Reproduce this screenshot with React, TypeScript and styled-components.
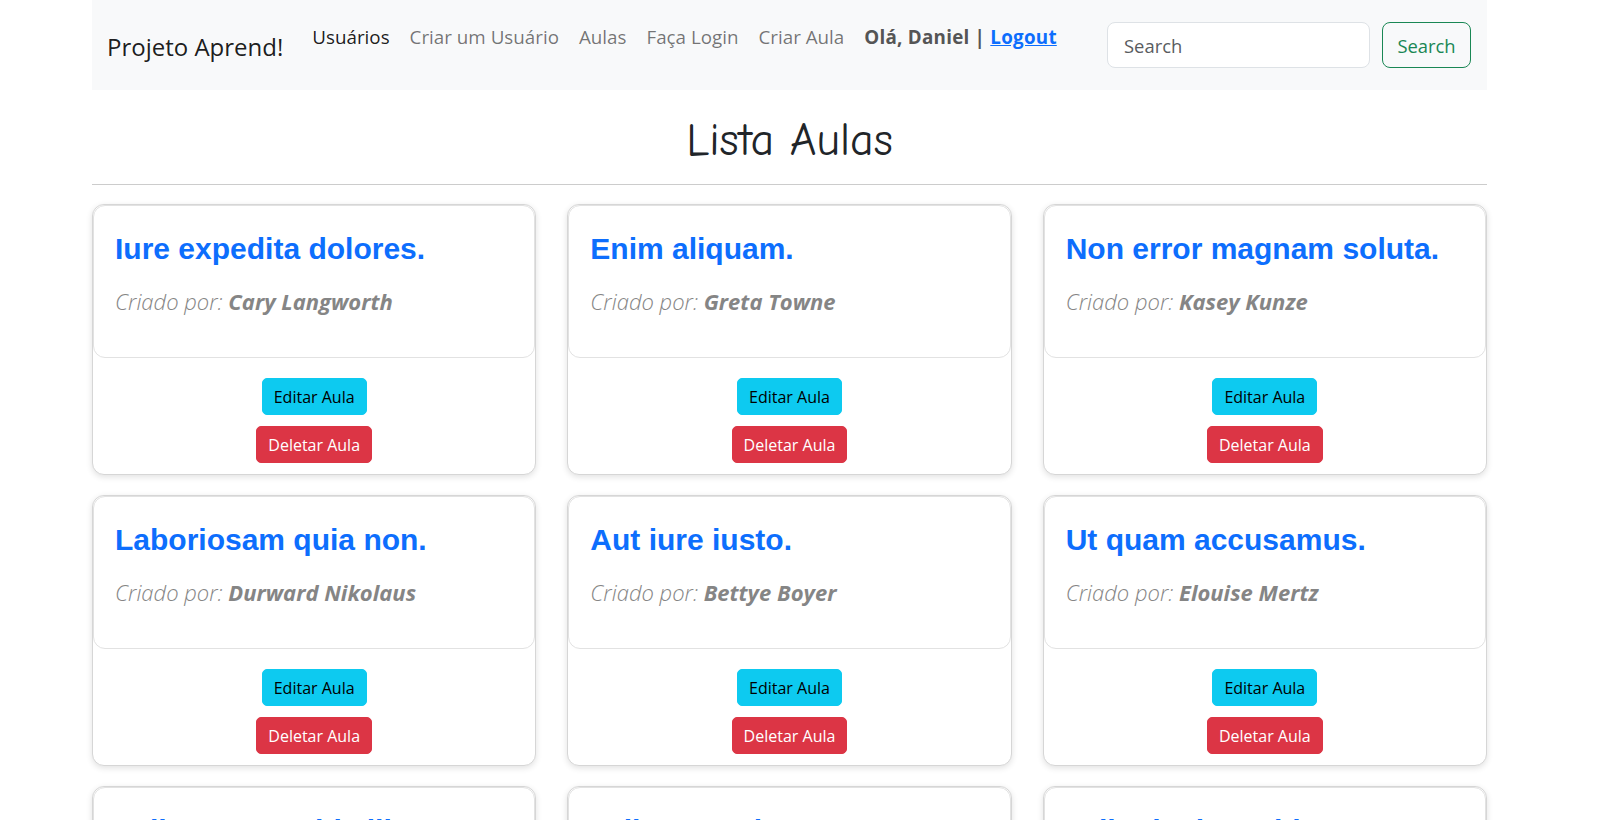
import React from "react";
import styled, { createGlobalStyle } from "styled-components";

const GlobalStyle = createGlobalStyle`
  html, body { margin: 0; padding: 0; background: #ffffff; }
  body {
    font-family: "Open Sans", "Noto Sans", Arial, sans-serif;
    color: #212529;
    overflow: hidden;
  }
  * { box-sizing: border-box; }
`;

const Page = styled.div`
  width: 1395px;
  margin-left: 92px;
`;

const NavBar = styled.nav`
  height: 90px;
  background: #f8f9fa;
  display: flex;
  align-items: flex-start;
  padding: 22px 16px 0 15px;
`;

const Brand = styled.a`
  font-size: 24px;
  line-height: 46px;
  padding-top: 2px;
  color: rgba(0, 0, 0, 0.9);
  text-decoration: none;
  white-space: nowrap;
`;

const NavList = styled.ul`
  list-style: none;
  margin: 0 0 0 29px;
  padding: 0;
  display: flex;
  gap: 20px;
  font-size: 18.8px;
  line-height: 30px;
`;

const NavLink = styled.a<{ $active?: boolean }>`
  color: ${(p) => (p.$active ? "rgba(0,0,0,0.9)" : "rgba(0,0,0,0.55)")};
  text-decoration: none;
  white-space: nowrap;
`;

const Greeting = styled.li`
  font-weight: 700;
  font-size: 18.8px;
  letter-spacing: 0.25px;
  color: #555555;
  white-space: nowrap;
`;

const LogoutLink = styled.a`
  color: #0d6efd;
  text-decoration: underline;
`;

const SearchForm = styled.form`
  margin-left: auto;
  display: flex;
  gap: 12px;
`;

const SearchInput = styled.input`
  width: 263px;
  height: 46px;
  padding: 0 16px;
  font-family: inherit;
  font-size: 18.4px;
  color: #212529;
  background: #ffffff;
  border: 1px solid #dee2e6;
  border-radius: 8px;
  outline: none;
  &::placeholder { color: #595c5f; }
`;

const SearchButton = styled.button`
  width: 89px;
  height: 46px;
  font-family: inherit;
  font-size: 18.4px;
  color: #198754;
  background: transparent;
  border: 1px solid #198754;
  border-radius: 8px;
  padding: 0;
`;

const PageTitle = styled.h1`
  margin: 28px 0 20px;
  text-align: center;
  font-family: "Comic Sans MS", "Comic Neue", "DejaVu Sans", sans-serif;
  font-weight: 400;
  font-size: 46px;
  line-height: 46px;
  color: #212529;
`;

const Divider = styled.hr`
  margin: 0 0 19px;
  border: 0;
  border-top: 1px solid #cccccc;
`;

const Grid = styled.div`
  display: grid;
  grid-template-columns: repeat(3, 1fr);
  column-gap: 31px;
  row-gap: 20px;
`;

const Card = styled.div`
  background: #ffffff;
  border: 1px solid #d6d6d6;
  border-radius: 12px;
  box-shadow: 0 2px 6px rgba(0, 0, 0, 0.12);
  display: flex;
  flex-direction: column;
`;

const CardBody = styled.div`
  border: 1px solid #e2e2e2;
  border-radius: 12px;
  padding: 24px 21px 41px;
`;

const CardTitle = styled.h3`
  margin: 0 0 18px;
  font-family: "Liberation Sans", Arial, sans-serif;
  font-weight: 700;
  font-size: 30px;
  line-height: 38px;
  color: #0d6efd;
  white-space: nowrap;
`;

const Author = styled.p`
  margin: 0;
  font-size: 22px;
  line-height: 30px;
  font-style: italic;
  font-weight: 300;
  color: #858585;
  white-space: nowrap;
`;

const AuthorName = styled.b`
  font-weight: 700;
`;

const CardFooter = styled.div`
  display: flex;
  flex-direction: column;
  align-items: center;
  gap: 11px;
  padding: 20px 0 11px;
`;

const ActionButton = styled.button<{ $variant: "info" | "danger" }>`
  height: 37px;
  padding: 0 11px;
  font-family: inherit;
  font-size: 16px;
  border: 1px solid ${(p) => (p.$variant === "info" ? "#0dcaf0" : "#dc3545")};
  background: ${(p) => (p.$variant === "info" ? "#0dcaf0" : "#dc3545")};
  color: ${(p) => (p.$variant === "info" ? "#000000" : "#ffffff")};
  border-radius: 5px;
`;

const aulas = [
  { title: "Iure expedita dolores.", author: "Cary Langworth" },
  { title: "Enim aliquam.", author: "Greta Towne" },
  { title: "Non error magnam soluta.", author: "Kasey Kunze" },
  { title: "Laboriosam quia non.", author: "Durward Nikolaus" },
  { title: "Aut iure iusto.", author: "Bettye Boyer" },
  { title: "Ut quam accusamus.", author: "Elouise Mertz" },
  { title: "Velit rerum nobis illum.", author: "Jaylen Kuhn" },
  { title: "Odit corporis et aut.", author: "Marcos Hills" },
  { title: "Odio ducimus id.", author: "Lila Ortiz" },
];

export default function App() {
  return (
    <>
      <GlobalStyle />
      <Page>
        <NavBar>
          <Brand href="#">Projeto Aprend!</Brand>
          <NavList>
            <li><NavLink $active href="#">Usuários</NavLink></li>
            <li><NavLink href="#">Criar um Usuário</NavLink></li>
            <li><NavLink href="#">Aulas</NavLink></li>
            <li><NavLink href="#">Faça Login</NavLink></li>
            <li><NavLink href="#">Criar Aula</NavLink></li>
            <Greeting>
              Olá, Daniel | <LogoutLink href="#">Logout</LogoutLink>
            </Greeting>
          </NavList>
          <SearchForm onSubmit={(e) => e.preventDefault()}>
            <SearchInput type="search" placeholder="Search" aria-label="Search" />
            <SearchButton type="submit">Search</SearchButton>
          </SearchForm>
        </NavBar>
        <PageTitle>Lista Aulas</PageTitle>
        <Divider />
        <Grid>
          {aulas.map((a) => (
            <Card key={a.title}>
              <CardBody>
                <CardTitle>{a.title}</CardTitle>
                <Author>
                  Criado por: <AuthorName>{a.author}</AuthorName>
                </Author>
              </CardBody>
              <CardFooter>
                <ActionButton $variant="info">Editar Aula</ActionButton>
                <ActionButton $variant="danger">Deletar Aula</ActionButton>
              </CardFooter>
            </Card>
          ))}
        </Grid>
      </Page>
    </>
  );
}
